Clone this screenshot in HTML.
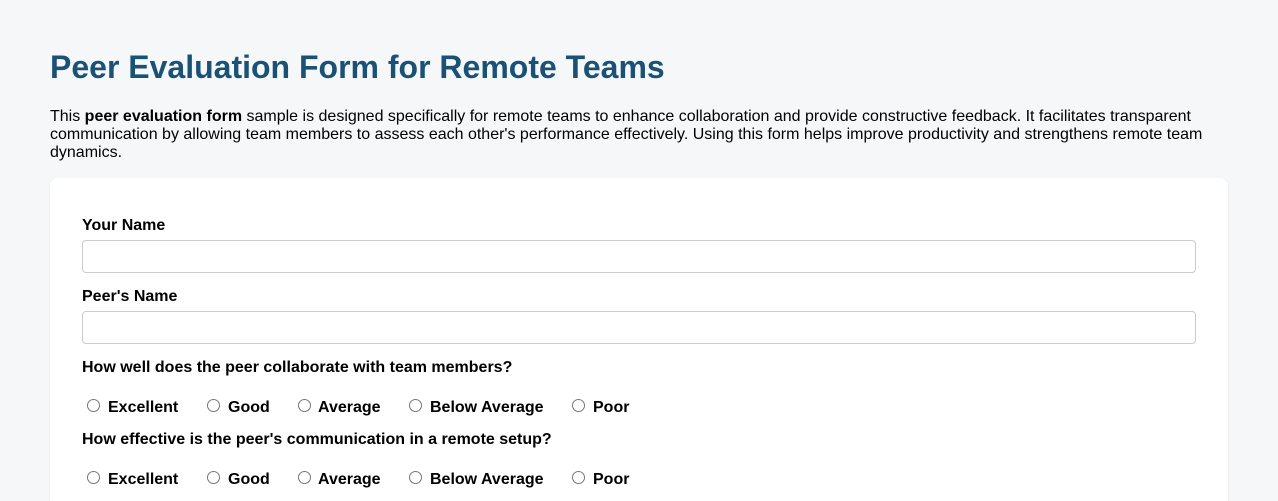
<!DOCTYPE html>
<html><head><style>
html,body{height:501px;overflow:hidden;}
body{margin:0;background:#f5f7f9;font-family:"Liberation Sans",Arial,sans-serif;color:#000;}
h1{position:absolute;left:50px;top:49px;margin:0;font-size:32px;color:#1a5276;font-weight:bold;}
p.d{position:absolute;left:50px;top:108px;margin:0;width:1180px;font-size:16px;line-height:18px;}
.card{position:absolute;left:50px;top:178px;width:1178px;height:323px;background:#fff;border-radius:8px 8px 0 0;box-shadow:0 1px 3px rgba(0,0,0,.05);}
.lbl{position:absolute;left:82px;font-size:16px;font-weight:bold;}
.in{position:absolute;left:82px;width:1112px;height:31px;border:1px solid #ccc;border-radius:4px;background:#fff;}
.r{position:absolute;font-size:16px;font-weight:bold;}
.c{position:absolute;width:11px;height:11px;border:1px solid #777;border-radius:50%;background:#fff;}
</style></head><body>
<h1>Peer Evaluation Form for Remote Teams</h1>
<p class="d">This <b>peer evaluation form</b> sample is designed specifically for remote teams to enhance collaboration and provide constructive feedback. It facilitates transparent communication by allowing team members to assess each other's performance effectively. Using this form helps improve productivity and strengthens remote team dynamics.</p>
<div class="card"></div>
<div class="lbl" style="top:217px">Your Name</div>
<div class="in" style="top:240px"></div>
<div class="lbl" style="top:288px">Peer's Name</div>
<div class="in" style="top:311px"></div>
<div class="lbl" style="top:359px">How well does the peer collaborate with team members?</div>
<div class="lbl" style="top:431px">How effective is the peer's communication in a remote setup?</div>
<script>
var opts=[[87,108,"Excellent"],[207,228,"Good"],[298,318,"Average"],[409,430,"Below Average"],[572,593,"Poor"]];
[399,471].forEach(function(t){opts.forEach(function(o){
var c=document.createElement('div');c.className='c';c.style.left=o[0]+'px';c.style.top=t+'px';document.body.appendChild(c);
var s=document.createElement('div');s.className='r';s.style.left=o[1]+'px';s.style.top=t+'px';s.textContent=o[2];document.body.appendChild(s);});});
</script>
</body></html>
